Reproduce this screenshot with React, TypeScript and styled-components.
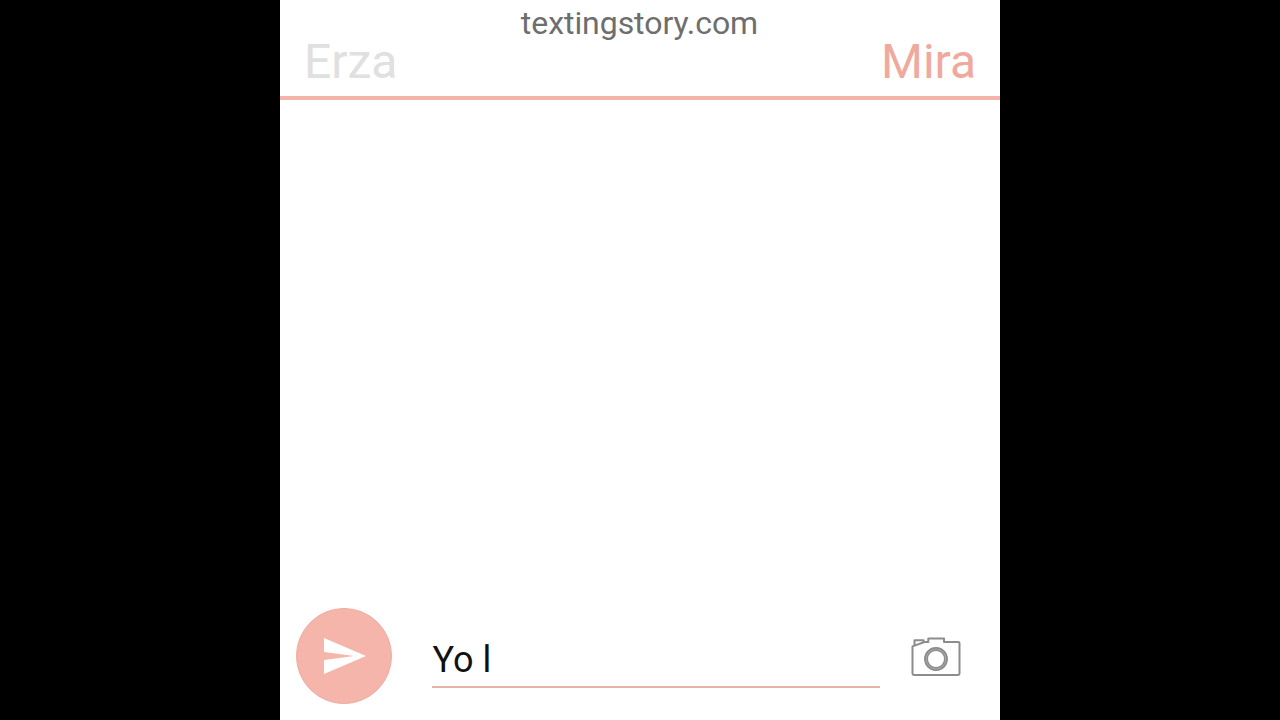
import styled, { createGlobalStyle } from 'styled-components';

const GlobalStyle = createGlobalStyle`
  body {
    margin: 0;
    background-color: #000;
    font-family: Roboto, sans-serif;
  }
`;

const Page = styled.div`
  display: flex;
  justify-content: center;
  height: 100vh;
`;

const Phone = styled.main`
  display: flex;
  flex-direction: column;
  width: 720px;
  background-color: #fff;
`;

const Header = styled.header`
  display: grid;
  grid-template-columns: 1fr auto 1fr;
  box-sizing: border-box;
  height: 100px;
  padding: 0 24px;
  border-bottom: 4px solid #f3b4a9;
`;

const Site = styled.div`
  padding: 4px 1px 0 0;
  color: #6e6e6e;
  font-size: 32px;
  line-height: 38px;
  letter-spacing: -0.06px;
`;

const Name = styled.div<{ $active?: boolean }>`
  padding-top: 34px;
  color: ${(props) => (props.$active ? '#f0a99d' : '#e0e0e0')};
  font-size: 48px;
  line-height: 56px;
  text-align: ${(props) => (props.$active ? 'right' : 'left')};
`;

const Messages = styled.section`
  flex: 1;
`;

const Composer = styled.footer`
  display: flex;
  align-items: center;
  height: 96px;
  padding: 0 39px 16px 16px;
`;

const SendBtn = styled.button`
  display: flex;
  align-items: center;
  justify-content: center;
  width: 96px;
  height: 96px;
  padding: 0;
  border: 1px solid #efaca1;
  border-radius: 50%;
  background-color: #f5b5aa;
  cursor: pointer;
`;

const Field = styled.div`
  box-sizing: border-box;
  width: 448px;
  height: 52px;
  margin: 12px 31px 0 40px;
  padding-left: 0.5px;
  border-bottom: 2px solid #e6b3a9;
  color: #111;
  font-size: 36px;
  line-height: 49px;
`;

const CameraBtn = styled.button`
  display: flex;
  padding: 0;
  border: none;
  background: none;
  cursor: pointer;
`;

export default function App() {
  return (
    <Page>
      <GlobalStyle />
      <Phone>
        <Header>
          <Name>Erza</Name>
          <Site>textingstory.com</Site>
          <Name $active>Mira</Name>
        </Header>
        <Messages />
        <Composer>
          <SendBtn aria-label="Send">
            <svg width="48" height="48" viewBox="0 0 24 24" fill="#fff">
              <path d="M2.01 21L23 12 2.01 3 2 10l15 2-15 2z" />
            </svg>
          </SendBtn>
          <Field>Yo l</Field>
          <CameraBtn aria-label="Camera">
            <svg
              width="50"
              height="40"
              viewBox="0 0 50 40"
              fill="none"
              stroke="#8c8c8c"
              strokeWidth="2"
              strokeLinejoin="round"
            >
              <path d="M1.5 10.4L13.5 6H17.3V2.6H33V6H47.2Q48.5 6 48.5 7.3V37.6Q48.5 39 47.2 39H2.8Q1.5 39 1.5 37.6z" />
              <path d="M3.5 9.4V4.2H12.5V6.3" />
              <circle cx="25" cy="23" r="10" stroke="#ababab" strokeWidth="3" />
              <circle cx="25" cy="23" r="11.1" strokeWidth="1.6" />
              <circle cx="25" cy="23" r="8.7" strokeWidth="1.4" />
            </svg>
          </CameraBtn>
        </Composer>
      </Phone>
    </Page>
  );
}
